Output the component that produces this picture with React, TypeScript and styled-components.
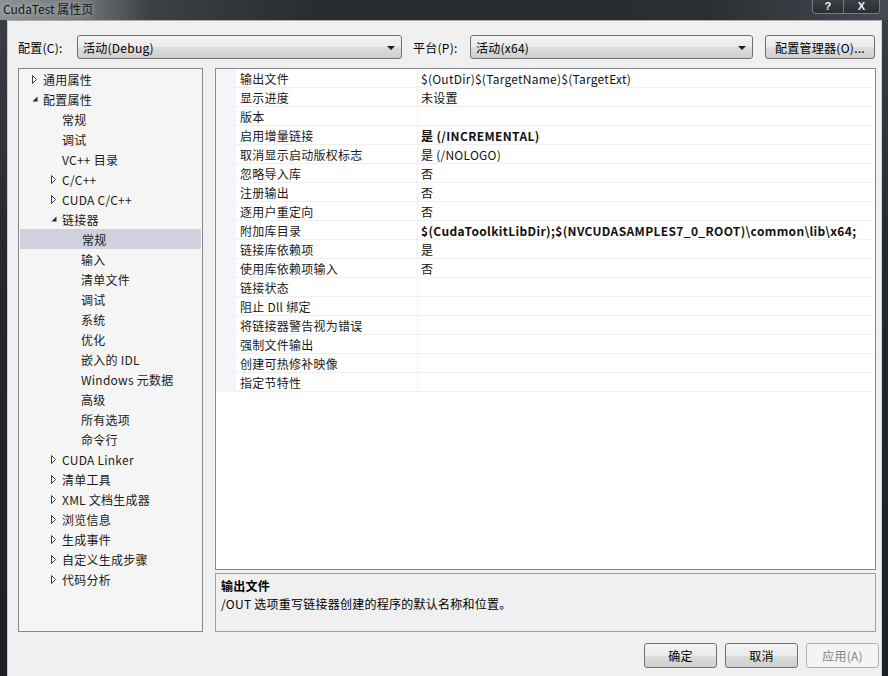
import styled, { createGlobalStyle } from "styled-components";

const GlobalStyle = createGlobalStyle`
  html, body {
    margin: 0;
    padding: 0;
    background: #1f2327;
  }
  body {
    font-family: "Noto Sans CJK SC", "Liberation Sans", sans-serif;
    font-size: 12px;
    letter-spacing: 0.25px;
    color: #000;
  }
`;

const Window = styled.div`
  width: 888px;
  height: 676px;
  overflow: hidden;
  display: flex;
  flex-direction: column;
  background: linear-gradient(180deg, #3b4046 0%, #24282c 40%, #1c1f23 100%);
`;

const TitleBar = styled.div`
  height: 20px;
  flex-shrink: 0;
  display: flex;
  justify-content: space-between;
  align-items: flex-start;
  background: linear-gradient(
    90deg,
    #8e9194 0px,
    #74787c 80px,
    #3c4045 150px,
    #272b30 330px,
    #2a2e33 700px,
    #444a50 888px
  );
`;

const TitleText = styled.div`
  padding-left: 3px;
  line-height: 17px;
  font-size: 12px;
  letter-spacing: 0;
  color: #151515;
  text-shadow: 0 0 6px rgba(255, 255, 255, 0.7);
`;

const CaptionButtons = styled.div`
  display: flex;
  margin-right: 8px;
`;

const CaptionButton = styled.div<{ $width: number }>`
  width: ${(p) => p.$width}px;
  height: 14px;
  box-sizing: border-box;
  border: 1px solid rgba(200, 205, 210, 0.45);
  border-top: none;
  background: linear-gradient(180deg, #3a3f45, #2a2e33);
  color: #f2f2f2;
  font-family: "Liberation Sans", sans-serif;
  font-weight: 700;
  font-size: 11px;
  line-height: 12px;
  text-align: center;
  &:first-child {
    border-bottom-left-radius: 4px;
    border-right: none;
  }
  &:last-child {
    border-bottom-right-radius: 4px;
  }
`;

const FrameBody = styled.div`
  flex: 1;
  display: flex;
  padding: 0 6px 0 7px;
  min-height: 0;
`;

const Client = styled.div`
  flex: 1;
  display: flex;
  flex-direction: column;
  background: #f0f0f0;
  border-top: 1px solid #a7acb1;
  border-left: 1px solid #c9ccd0;
  border-right: 1px solid #d0d3d6;
  padding: 14px 5px 0 10px;
`;

const TopRow = styled.div`
  display: flex;
  align-items: center;
  height: 24px;
`;

const Label = styled.div<{ $width: number; $gap?: number }>`
  width: ${(p) => p.$width}px;
  margin-left: ${(p) => p.$gap ?? 0}px;
  padding-top: 2px;
  line-height: 16px;
`;

const Combo = styled.div<{ $width: number }>`
  width: ${(p) => p.$width}px;
  height: 24px;
  box-sizing: border-box;
  display: flex;
  align-items: center;
  justify-content: space-between;
  padding: 1px 6px 0 5px;
  border: 1px solid #707070;
  border-radius: 3px;
  background: linear-gradient(180deg, #f3f3f3 0%, #ebebeb 50%, #dddddd 51%, #cfcfcf 100%);
  line-height: 16px;
`;

const ComboArrow = styled.span`
  width: 0;
  height: 0;
  border-left: 4px solid transparent;
  border-right: 4px solid transparent;
  border-top: 4px solid #1c1c1c;
`;

const PushButton = styled.div<{ $width: number; $disabled?: boolean }>`
  width: ${(p) => p.$width}px;
  height: 100%;
  box-sizing: border-box;
  display: flex;
  align-items: center;
  justify-content: center;
  padding-top: 1px;
  border: 1px solid ${(p) => (p.$disabled ? "#adb2b5" : "#707070")};
  border-radius: 3px;
  background: ${(p) =>
    p.$disabled
      ? "#f4f4f4"
      : "linear-gradient(180deg, #f3f3f3 0%, #ebebeb 50%, #dddddd 51%, #cfcfcf 100%)"};
  color: ${(p) => (p.$disabled ? "#838383" : "#000")};
  line-height: 16px;
`;

const ManagerSlot = styled.div`
  height: 24px;
  margin-left: 12px;
  display: flex;
`;

const Main = styled.div`
  display: flex;
  gap: 12px;
  margin-top: 9px;
  height: 564px;
`;

const Tree = styled.div`
  width: 185px;
  box-sizing: border-box;
  border: 1px solid #828790;
  background: #f5f5f5;
  padding: 0 1px 0 0;
`;

const TreeRow = styled.div<{ $level: number; $selected?: boolean }>`
  height: 20px;
  box-sizing: border-box;
  display: flex;
  align-items: center;
  padding-left: ${(p) => 13 + p.$level * 19}px;
  margin-left: ${(p) => (p.$selected ? 1 : 0)}px;
  background: ${(p) => (p.$selected ? "#cfd1dd" : "transparent")};
  line-height: 16px;
  color: #1a1a1a;
  span + span {
    padding-top: 2px;
  }
`;

const Expander = styled.span`
  width: 11px;
  height: 20px;
  display: flex;
  align-items: center;
  flex-shrink: 0;
`;

const RightCol = styled.div`
  width: 661px;
  display: flex;
  flex-direction: column;
  gap: 3px;
`;

const Grid = styled.div`
  height: 502px;
  box-sizing: border-box;
  border: 1px solid #828790;
  background: #fff;
`;

const GridRow = styled.div`
  display: grid;
  grid-template-columns: 20px 181px 1fr;
  height: 19px;
`;

const Gutter = styled.div`
  background: #f4f5f8;
`;

const NameCell = styled.div`
  box-sizing: border-box;
  padding: 2px 0 0 4px;
  border-bottom: 1px solid #f0f0f0;
  line-height: 16px;
  color: #1a1a1a;
  white-space: nowrap;
`;

const ValueCell = styled.div<{ $bold?: boolean }>`
  box-sizing: border-box;
  padding: 2px 0 0 3px;
  border-left: 1px solid #f0f0f0;
  border-bottom: 1px solid #f0f0f0;
  line-height: 16px;
  font-weight: ${(p) => (p.$bold ? 700 : 400)};
  letter-spacing: ${(p) => (p.$bold ? 0.35 : 0.25)}px;
  color: #111;
  white-space: nowrap;
  overflow: hidden;
`;

const Description = styled.div`
  height: 59px;
  box-sizing: border-box;
  border: 1px solid #a0a0a0;
  background: #f0f0f0;
  padding: 3px 5px 0;
  line-height: 18px;
`;

const DescTitle = styled.div`
  font-weight: 700;
`;

const ButtonRow = styled.div`
  display: flex;
  justify-content: flex-end;
  gap: 8px;
  height: 25px;
  margin-top: 11px;
  margin-right: -3px;
`;

function Collapsed() {
  return (
    <svg width="6" height="9" viewBox="0 0 6 9">
      <polygon points="0.5,0.5 4.5,4.5 0.5,8.5" fill="#fff" stroke="#3a3a3a" strokeWidth="1" />
    </svg>
  );
}

function Expanded() {
  return (
    <svg width="6" height="6" viewBox="0 0 6 6">
      <polygon points="5.5,0.5 5.5,5.5 0.5,5.5" fill="#262626" />
    </svg>
  );
}

type TreeItem = { label: string; level: number; state?: "open" | "closed"; selected?: boolean };

const treeItems: TreeItem[] = [
  { label: "通用属性", level: 0, state: "closed" },
  { label: "配置属性", level: 0, state: "open" },
  { label: "常规", level: 1 },
  { label: "调试", level: 1 },
  { label: "VC++ 目录", level: 1 },
  { label: "C/C++", level: 1, state: "closed" },
  { label: "CUDA C/C++", level: 1, state: "closed" },
  { label: "链接器", level: 1, state: "open" },
  { label: "常规", level: 2, selected: true },
  { label: "输入", level: 2 },
  { label: "清单文件", level: 2 },
  { label: "调试", level: 2 },
  { label: "系统", level: 2 },
  { label: "优化", level: 2 },
  { label: "嵌入的 IDL", level: 2 },
  { label: "Windows 元数据", level: 2 },
  { label: "高级", level: 2 },
  { label: "所有选项", level: 2 },
  { label: "命令行", level: 2 },
  { label: "CUDA Linker", level: 1, state: "closed" },
  { label: "清单工具", level: 1, state: "closed" },
  { label: "XML 文档生成器", level: 1, state: "closed" },
  { label: "浏览信息", level: 1, state: "closed" },
  { label: "生成事件", level: 1, state: "closed" },
  { label: "自定义生成步骤", level: 1, state: "closed" },
  { label: "代码分析", level: 1, state: "closed" },
];

type Prop = { name: string; value?: string; bold?: boolean };

const props: Prop[] = [
  { name: "输出文件", value: "$(OutDir)$(TargetName)$(TargetExt)" },
  { name: "显示进度", value: "未设置" },
  { name: "版本" },
  { name: "启用增量链接", value: "是 (/INCREMENTAL)", bold: true },
  { name: "取消显示启动版权标志", value: "是 (/NOLOGO)" },
  { name: "忽略导入库", value: "否" },
  { name: "注册输出", value: "否" },
  { name: "逐用户重定向", value: "否" },
  {
    name: "附加库目录",
    value: "$(CudaToolkitLibDir);$(NVCUDASAMPLES7_0_ROOT)\\common\\lib\\x64;",
    bold: true,
  },
  { name: "链接库依赖项", value: "是" },
  { name: "使用库依赖项输入", value: "否" },
  { name: "链接状态" },
  { name: "阻止 Dll 绑定" },
  { name: "将链接器警告视为错误" },
  { name: "强制文件输出" },
  { name: "创建可热修补映像" },
  { name: "指定节特性" },
];

export default function App() {
  return (
    <>
      <GlobalStyle />
      <Window>
        <TitleBar>
          <TitleText>CudaTest 属性页</TitleText>
          <CaptionButtons>
            <CaptionButton $width={31}>?</CaptionButton>
            <CaptionButton $width={37}>X</CaptionButton>
          </CaptionButtons>
        </TitleBar>
        <FrameBody>
          <Client>
            <TopRow>
              <Label $width={59}>配置(C):</Label>
              <Combo $width={325}>
                <span>活动(Debug)</span>
                <ComboArrow />
              </Combo>
              <Label $width={57} $gap={11}>
                平台(P):
              </Label>
              <Combo $width={283}>
                <span>活动(x64)</span>
                <ComboArrow />
              </Combo>
              <ManagerSlot>
                <PushButton $width={110}>配置管理器(O)...</PushButton>
              </ManagerSlot>
            </TopRow>
            <Main>
              <Tree>
                {treeItems.map((item, i) => (
                  <TreeRow key={i} $level={item.level} $selected={item.selected}>
                    <Expander>
                      {item.state === "closed" && <Collapsed />}
                      {item.state === "open" && <Expanded />}
                    </Expander>
                    <span>{item.label}</span>
                  </TreeRow>
                ))}
              </Tree>
              <RightCol>
                <Grid>
                  {props.map((p, i) => (
                    <GridRow key={i}>
                      <Gutter />
                      <NameCell>{p.name}</NameCell>
                      <ValueCell $bold={p.bold}>{p.value}</ValueCell>
                    </GridRow>
                  ))}
                </Grid>
                <Description>
                  <DescTitle>输出文件</DescTitle>
                  <div>/OUT 选项重写链接器创建的程序的默认名称和位置。</div>
                </Description>
              </RightCol>
            </Main>
            <ButtonRow>
              <PushButton $width={73}>确定</PushButton>
              <PushButton $width={73}>取消</PushButton>
              <PushButton $width={73} $disabled>
                应用(A)
              </PushButton>
            </ButtonRow>
          </Client>
        </FrameBody>
      </Window>
    </>
  );
}
